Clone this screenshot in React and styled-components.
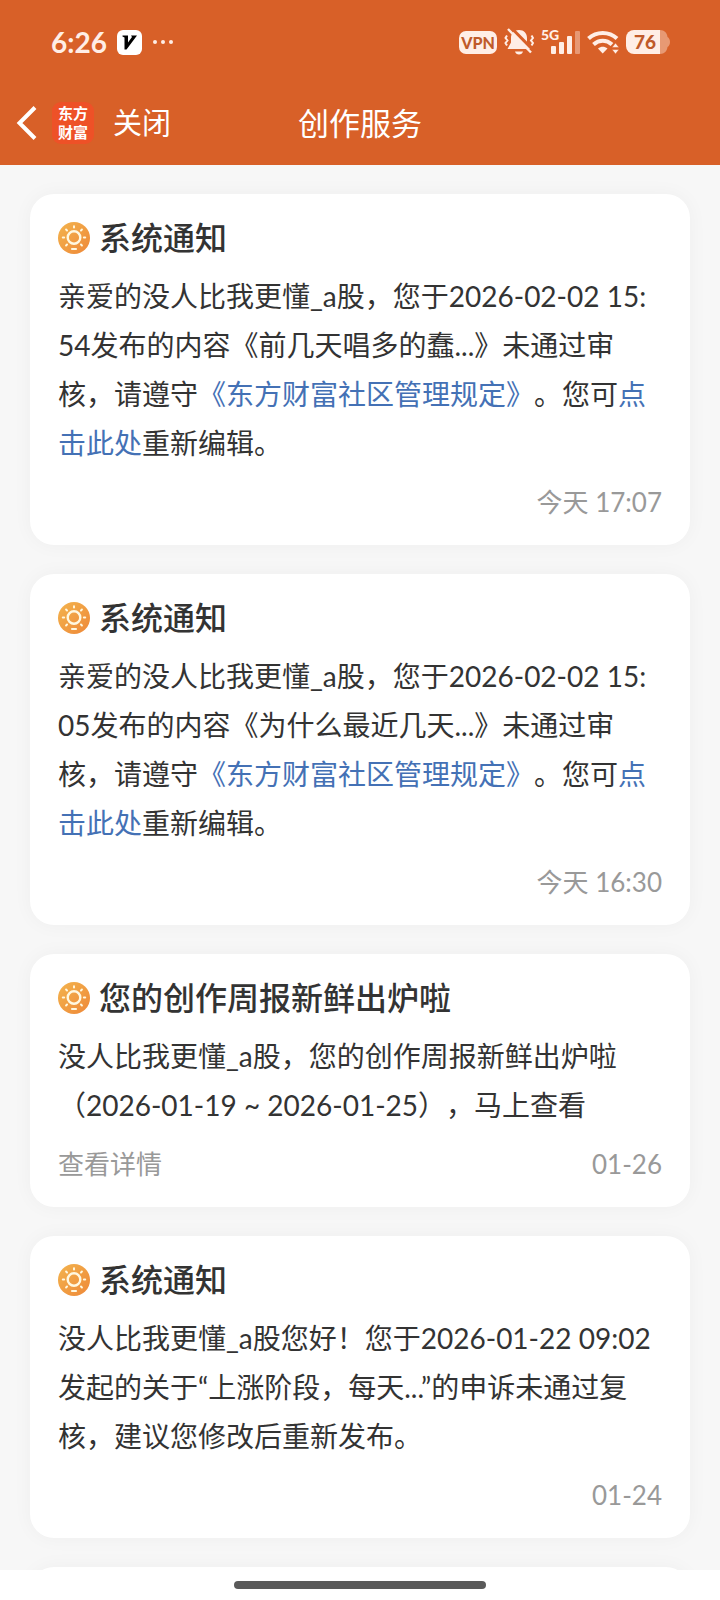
import React from "react";
import styled, { createGlobalStyle } from "styled-components";

const GlobalStyle = createGlobalStyle`
    * {
        box-sizing: border-box;
    }
    body {
        margin: 0;
        background: #fff;
        font-family: Lato, "Noto Sans CJK SC", sans-serif;
        text-spacing-trim: space-all;
    }
`;

const Page = styled.div`
    height: 100vh;
    display: flex;
    flex-direction: column;
`;

const Header = styled.header`
    flex: none;
    padding-bottom: 4px;
    background: #d86028;
    color: #fff;
`;

const StatusBar = styled.div`
    height: 84px;
    padding: 0 50px 0 51px;
    display: flex;
    align-items: center;
    justify-content: space-between;
    color: #ffeee6;
`;

const StatusGroup = styled.div`
    display: flex;
    align-items: center;
    gap: ${(props) => props.$gap}px;

    svg {
        display: block;
    }
`;

const Clock = styled.span`
    font-size: 28px;
    font-weight: 700;
    line-height: 28px;
`;

const VpnBadge = styled.span`
    width: 38px;
    border-radius: 7px;
    background: #ffeee6;
    color: #c05a2a;
    font-size: 16px;
    font-weight: 900;
    line-height: 23px;
    text-align: center;
`;

const Signal = styled.div`
    position: relative;
    padding-left: 10px;
`;

const NetworkType = styled.span`
    position: absolute;
    top: -3px;
    left: 0;
    font-size: 14px;
    font-weight: 900;
    line-height: 14px;
`;

const Battery = styled.div`
    display: flex;
    align-items: center;
`;

const BatteryLevel = styled.span`
    width: 34px;
    padding-left: 4px;
    border-radius: 8px 0 0 8px;
    background: #ffeee6;
    color: #c05a2a;
    font-size: 19px;
    font-weight: 900;
    line-height: 24px;
    text-align: center;
`;

const NavBar = styled.nav`
    height: 77px;
    padding: 0 16px;
    display: grid;
    grid-template-columns: 1fr auto 1fr;
    align-items: center;
`;

const NavLeft = styled.div`
    display: flex;
    align-items: center;
`;

const NavButton = styled.button`
    padding: 0;
    border: 0;
    background: none;
    color: inherit;
    font-family: inherit;
    font-size: 29px;
    line-height: 40px;
    cursor: pointer;

    svg {
        display: block;
    }
`;

const Logo = styled.span`
    width: 42px;
    margin: 0 19px 0 15px;
    padding: 2px 0;
    border-radius: 9px;
    background: #ee5127;
    font-size: 15px;
    font-weight: 700;
    line-height: 19px;
    text-align: center;
`;

const NavTitle = styled.h1`
    margin: 0;
    font-size: 31px;
    font-weight: 400;
    line-height: 40px;
`;

const Feed = styled.main`
    flex: 1;
    min-height: 0;
    padding: 29px 30px;
    display: flex;
    flex-direction: column;
    gap: 29px;
    overflow-y: auto;
    scrollbar-width: none;
    background: #f7f7f7;
`;

const Card = styled.article`
    flex: none;
    padding: 28px;
    border-radius: 24px;
    background: #fff;
    box-shadow: 0 0 20px rgba(0, 0, 0, 0.04);
`;

const CardHeader = styled.div`
    display: flex;
    align-items: center;
    gap: 9px;
`;

const CardTitle = styled.h2`
    margin: 0;
    color: #333;
    font-size: 32px;
    font-weight: 500;
    line-height: 32px;
`;

const Message = styled.p`
    margin: 18px 0 19px;
    color: #333;
    font-size: 28px;
    line-height: 49px;
`;

const TextLink = styled.a`
    color: #4471b5;
    text-decoration: none;
`;

const CardFooter = styled.div`
    display: flex;
    justify-content: space-between;
    color: #999;
    font-size: 26px;
    line-height: 30px;
`;

const DetailLink = styled.a`
    color: inherit;
    text-decoration: none;
`;

const Time = styled.time`
    margin-left: auto;
`;

const HomeBar = styled.footer`
    flex: none;
    height: 30px;
    display: flex;
    align-items: center;
    justify-content: center;
    background: #fff;
`;

const HomeIndicator = styled.div`
    width: 35%;
    height: 8px;
    border-radius: 4px;
    background: #5a5a5a;
`;

const AppBadgeIcon = () => (
    <svg width="25" height="25" viewBox="0 0 25 25">
        <rect width="25" height="25" rx="6" fill="#fff" />
        <path d="M5.5 5.5h5.500v7l4-5.500-1-1.500H20L9.500 19.500H7.500V7.500L5.500 6.500z" fill="#000" />
    </svg>
);

const MoreDots = () => (
    <svg width="22" height="6" viewBox="0 0 22 6" fill="currentColor">
        <circle cx="3" cy="3" r="2" />
        <circle cx="11" cy="3" r="2" />
        <circle cx="19" cy="3" r="2" />
    </svg>
);

const MutedBell = () => (
    <svg width="30" height="28" viewBox="1 0 30 28" fill="currentColor">
        <path d="M16 2c5 0 8 3.500 8 8v4.500l3.500 6.500h-23L8 14.500V10c0-4.500 3-8 8-8z" />
        <path d="M12 23.500h8c-.5 2-2 3-4 3s-3.500-1-4-3z" />
        <path d="M4 7.500 2.500 10 4.500 12.500 2.500 15 4 17.500M28.500 7.500l1.500 2.500-2 2.500 2 2.500-1.500 2.500" fill="none" stroke="currentColor" strokeWidth="2" />
        <path d="M7.500 -1 30.500 22.500" stroke="#d86028" strokeWidth="3" />
        <path d="M5 1 28 24.500" stroke="currentColor" strokeWidth="2.400" />
    </svg>
);

const SignalBars = () => (
    <svg width="29" height="23" viewBox="0 0 29 23" fill="currentColor">
        <rect x="0" y="15" width="5" height="8" rx="1" />
        <rect x="8" y="11" width="5" height="12" rx="1" />
        <rect x="16" y="5" width="5" height="18" rx="1" />
        <rect x="24" y="0" width="5" height="23" rx="1" opacity="0.4" />
    </svg>
);

const WifiIcon = () => (
    <svg width="32" height="24" viewBox="0 0 32 24">
        <g fill="none" stroke="currentColor" strokeWidth="4">
            <path d="M1.500 8.500c8-7.500 20.500-7.500 28.500 0" />
            <path d="M6.500 14.500c5.500-5 13-5 18.500 0" />
        </g>
        <path d="M11 18.500c3-2.500 6.500-2.500 9.500 0L15.700 23.500z" fill="currentColor" />
        <path d="M28.500 13l3.500 4.500h-7zM28.500 24l3.500-4.500h-7z" fill="currentColor" stroke="#d86028" strokeWidth="0.500" />
    </svg>
);

const BatteryCap = () => (
    <svg width="10" height="24" viewBox="0 0 10 24" fill="currentColor" opacity="0.4">
        <path d="M0 0c4.500 0 7 3 7.500 7C9 8 10 9.500 10 12s-1 4-2.500 5c-.5 4-3 7-7.500 7z" />
    </svg>
);

const BackIcon = () => (
    <svg width="21" height="34" viewBox="0 0 21 34" fill="none" stroke="currentColor" strokeWidth="4">
        <path d="M19 1.500 3.500 17 19 32.500" />
    </svg>
);

// no ray at the bottom, the bulb base sits there
const rays = [0, 45, 90, 135, 225, 270, 315];

const NoticeIcon = () => (
    <svg width="32" height="32" viewBox="0 0 32 32">
        <defs>
            <linearGradient id="notice" x1="0" y1="0" x2="1" y2="1">
                <stop offset="0" stopColor="#f3b44e" />
                <stop offset="1" stopColor="#ee8838" />
            </linearGradient>
        </defs>
        <circle cx="16" cy="16" r="16" fill="url(#notice)" />
        <g stroke="#fff8e0" strokeLinecap="round" fill="none">
            <circle cx="16" cy="15.500" r="6.300" strokeWidth="2.400" />
            {rays.map((angle) => (
                <path key={angle} d="M16 4.300v1.300" strokeWidth="2" transform={`rotate(${angle} 16 15.500)`} />
            ))}
            <path d="M14 27h4" strokeWidth="2.200" />
        </g>
    </svg>
);

const RejectedPost = ({ date, minutes, post }) => (
    <>
        {`亲爱的没人比我更懂_a股，您于${date}`}
        <br />
        {`${minutes}发布的内容《${post}...》未通过审核，请遵守`}
        <TextLink href="#rules">《东方财富社区管理规定》</TextLink>
        。您可<TextLink href="#edit">点击此处</TextLink>重新编辑。
    </>
);

const notices = [
    {
        title: "系统通知",
        body: <RejectedPost date="2026-02-02 15:" minutes="54" post="前几天唱多的蠢" />,
        time: "今天 17:07",
    },
    {
        title: "系统通知",
        body: <RejectedPost date="2026-02-02 15:" minutes="05" post="为什么最近几天" />,
        time: "今天 16:30",
    },
    {
        title: "您的创作周报新鲜出炉啦",
        body: "没人比我更懂_a股，您的创作周报新鲜出炉啦（2026-01-19 ~ 2026-01-25），马上查看",
        detail: "查看详情",
        time: "01-26",
    },
    {
        title: "系统通知",
        body: "没人比我更懂_a股您好！您于2026-01-22 09:02发起的关于“上涨阶段，每天...”的申诉未通过复核，建议您修改后重新发布。",
        time: "01-24",
    },
];

const NoticeCard = ({ title, body, detail, time }) => (
    <Card>
        <CardHeader>
            <NoticeIcon />
            <CardTitle>{title}</CardTitle>
        </CardHeader>
        <Message>{body}</Message>
        <CardFooter>
            {detail && <DetailLink href="#detail">{detail}</DetailLink>}
            <Time>{time}</Time>
        </CardFooter>
    </Card>
);

const App = () => {
    return (
        <Page>
            <GlobalStyle />
            <Header>
                <StatusBar>
                    <StatusGroup $gap={10}>
                        <Clock>6:26</Clock>
                        <AppBadgeIcon />
                        <MoreDots />
                    </StatusGroup>
                    <StatusGroup $gap={7}>
                        <VpnBadge>VPN</VpnBadge>
                        <MutedBell />
                        <Signal>
                            <NetworkType>5G</NetworkType>
                            <SignalBars />
                        </Signal>
                        <WifiIcon />
                        <Battery>
                            <BatteryLevel>76</BatteryLevel>
                            <BatteryCap />
                        </Battery>
                    </StatusGroup>
                </StatusBar>
                <NavBar>
                    <NavLeft>
                        <NavButton aria-label="返回">
                            <BackIcon />
                        </NavButton>
                        <Logo>
                            东方
                            <br />
                            财富
                        </Logo>
                        <NavButton>关闭</NavButton>
                    </NavLeft>
                    <NavTitle>创作服务</NavTitle>
                </NavBar>
            </Header>
            <Feed>
                {notices.map((notice, index) => (
                    <NoticeCard key={index} {...notice} />
                ))}
                <Card />
            </Feed>
            <HomeBar>
                <HomeIndicator />
            </HomeBar>
        </Page>
    );
};

export default App;
